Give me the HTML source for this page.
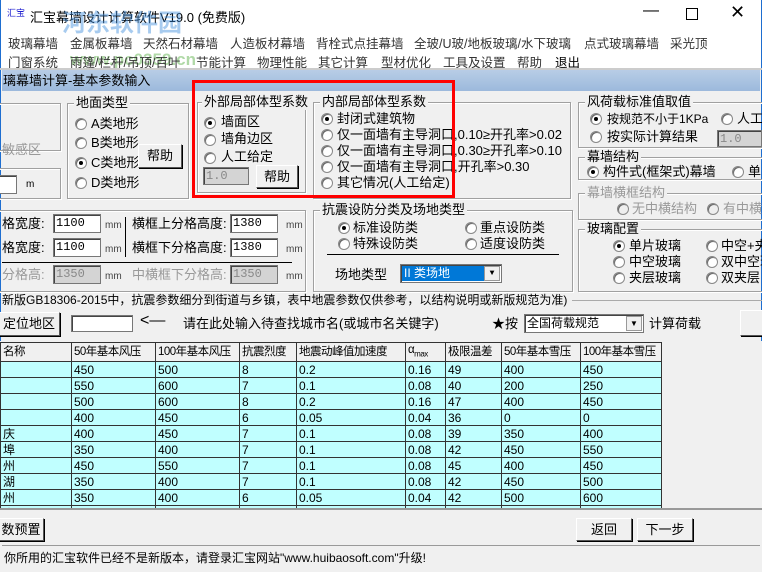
<!DOCTYPE html>
<html><head><meta charset="utf-8"><style>
*{box-sizing:border-box;margin:0;padding:0}
body{width:762px;height:572px;overflow:hidden;background:#f0f0f0;font-family:"Liberation Sans","Noto Sans CJK SC",sans-serif;font-size:12px;color:#000;position:relative}
.a{position:absolute;white-space:nowrap}
.grp{position:absolute;border:1px solid #a0a0a0;box-shadow:inset 1px 1px 0 #fff,1px 1px 0 #fff}
.lg{position:absolute;top:-9px;left:6px;background:#f0f0f0;padding:0 2px;font-size:13px;line-height:16px;white-space:nowrap}
.r{position:absolute;width:12px;height:12px;border-radius:50%;background:#fff;border:1px solid #888;box-shadow:inset 1px 1px 0 #666}
.r.on::after{content:"";position:absolute;left:3px;top:3px;width:4px;height:4px;border-radius:50%;background:#000}
.t{font-size:13px;line-height:16px}
.inp{position:absolute;background:#fff;border:1px solid #777;box-shadow:inset 1px 1px 0 #444;font-family:"Liberation Mono","Noto Sans CJK SC",monospace;font-size:12px;line-height:16px;padding-left:2px;white-space:nowrap}
.dis{background:#d4d4d4;color:#888}
.btn{position:absolute;background:#f0f0f0;border:1px solid #fff;border-right-color:#555;border-bottom-color:#555;box-shadow:1px 1px 0 #000;font-size:13px;text-align:center;white-space:nowrap}
table{border-collapse:collapse;position:absolute;left:0;top:342px;table-layout:fixed;width:661px;font-family:"Liberation Sans","Noto Sans CJK SC",sans-serif;font-size:12px}
td{border:1px solid #333;height:16px;padding:0 2px;line-height:14px;background:#c0ffff;white-space:nowrap;overflow:hidden}
tr.h td{background:#f0f0f0;height:15px;font-size:11.5px;letter-spacing:-0.5px}
.mm{font-size:10px;color:#444}
.m{position:absolute;font-size:12.5px;color:#333;white-space:nowrap}
</style></head><body>
<div class="a" style="left:0;top:0;width:762px;height:68px;background:#fff"></div>
<div class="a" style="left:0;top:0;width:1px;height:572px;background:#1e6ed0"></div>
<div class="a" style="left:761px;top:0;width:1px;height:572px;background:#1e6ed0"></div>
<div class="a" style="left:7px;top:6px;font-size:9px;color:#2020d0">汇宝</div>
<div class="a" style="left:30px;top:7px;font-size:13px">汇宝幕墙设计计算软件V19.0 (免费版)</div>
<div class="a" style="left:62px;top:10px;font-size:24px;font-weight:bold;color:rgba(60,140,220,.45);line-height:28px">河东软件园</div>
<div class="a" style="left:70px;top:50px;font-size:17px;font-weight:bold;color:rgba(80,170,60,.45)">www.pc0359.cn</div>
<div class="a" style="left:643px;top:2px;font-size:16px">—</div>
<div class="a" style="left:686px;top:8px;width:12px;height:12px;border:1px solid #000"></div>
<div class="a" style="left:730px;top:2px;font-size:18px">✕</div>

<div class="m" style="left:8px;top:33px">玻璃幕墙</div>
<div class="m" style="left:70px;top:33px">金属板幕墙</div>
<div class="m" style="left:143px;top:33px">天然石材幕墙</div>
<div class="m" style="left:230px;top:33px">人造板材幕墙</div>
<div class="m" style="left:316px;top:33px">背栓式点挂幕墙</div>
<div class="m" style="left:414px;top:33px">全玻/U玻/地板玻璃/水下玻璃</div>
<div class="m" style="left:584px;top:33px">点式玻璃幕墙</div>
<div class="m" style="left:670px;top:33px">采光顶</div>
<div class="m" style="left:8px;top:52px">门窗系统</div>
<div class="m" style="left:70px;top:52px">雨篷/栏杆/吊顶/百叶</div>
<div class="m" style="left:196px;top:52px">节能计算</div>
<div class="m" style="left:257px;top:52px">物理性能</div>
<div class="m" style="left:318px;top:52px">其它计算</div>
<div class="m" style="left:381px;top:52px">型材优化</div>
<div class="m" style="left:443px;top:52px">工具及设置</div>
<div class="m" style="left:517px;top:52px">帮助</div>
<div class="m" style="left:555px;top:52px;color:#000">退出</div>

<div class="a" style="left:0;top:68px;width:762px;height:2px;background:#ccc"></div>
<div class="a" style="left:2px;top:70px;width:758px;height:21px;background:linear-gradient(#b8cde6,#9cb9dc)"></div>
<div class="a t" style="left:3px;top:73px">璃幕墙计算-基本参数输入</div>

<div class="grp" style="left:-2px;top:103px;width:63px;height:48px"></div>
<div class="a t" style="left:2px;top:142px;color:#999">敏感区</div>
<div class="grp" style="left:-2px;top:168px;width:63px;height:31px"></div>
<div class="inp" style="left:-2px;top:175px;width:19px;height:19px"></div>
<div class="a" style="left:26px;top:179px;font-size:10px">m</div>

<div class="grp" style="left:67px;top:103px;width:122px;height:96px"><span class="lg">地面类型</span></div>
<div class="r" style="left:75px;top:118px"></div><div class="a t" style="left:91px;top:116px">A类地形</div>
<div class="r" style="left:75px;top:137px"></div><div class="a t" style="left:91px;top:135px">B类地形</div>
<div class="r on" style="left:75px;top:157px"></div><div class="a t" style="left:91px;top:155px">C类地形</div>
<div class="r" style="left:75px;top:177px"></div><div class="a t" style="left:91px;top:175px">D类地形</div>
<div class="btn" style="left:138px;top:144px;width:44px;height:24px;line-height:22px">帮助</div>

<div class="grp" style="left:197px;top:102px;width:109px;height:91px"><span class="lg" style="left:4px">外部局部体型系数</span></div>
<div class="r on" style="left:204px;top:117px"></div><div class="a t" style="left:221px;top:114px">墙面区</div>
<div class="r" style="left:204px;top:134px"></div><div class="a t" style="left:221px;top:131px">墙角边区</div>
<div class="r" style="left:204px;top:152px"></div><div class="a t" style="left:221px;top:149px">人工给定</div>
<div class="inp dis" style="left:203px;top:167px;width:46px;height:18px">1.0</div>
<div class="btn" style="left:256px;top:165px;width:42px;height:23px;line-height:21px">帮助</div>

<div class="grp" style="left:313px;top:102px;width:258px;height:97px"><span class="lg">内部局部体型系数</span></div>
<div class="r on" style="left:321px;top:113px"></div><div class="a t" style="left:337px;top:111px">封闭式建筑物</div>
<div class="r" style="left:321px;top:129px"></div><div class="a t" style="left:337px;top:127px">仅一面墙有主导洞口,0.10≥开孔率&gt;0.02</div>
<div class="r" style="left:321px;top:145px"></div><div class="a t" style="left:337px;top:143px">仅一面墙有主导洞口,0.30≥开孔率&gt;0.10</div>
<div class="r" style="left:321px;top:161px"></div><div class="a t" style="left:337px;top:159px">仅一面墙有主导洞口,开孔率&gt;0.30</div>
<div class="r" style="left:321px;top:177px"></div><div class="a t" style="left:337px;top:175px">其它情况(人工给定)</div>

<div class="a" style="left:192px;top:80px;width:263px;height:118px;border:3px solid #f00"></div>

<div class="grp" style="left:578px;top:102px;width:190px;height:46px"><span class="lg">风荷载标准值取值</span></div>
<div class="r on" style="left:590px;top:113px"></div><div class="a t" style="left:607px;top:111px;font-size:12px">按规范不小于1KPa</div>
<div class="r" style="left:721px;top:113px"></div><div class="a t" style="left:737px;top:111px">人工</div>
<div class="r" style="left:590px;top:131px"></div><div class="a t" style="left:607px;top:129px">按实际计算结果</div>
<div class="inp dis" style="left:717px;top:130px;width:45px;height:17px">1.0</div>
<div class="grp" style="left:578px;top:157px;width:190px;height:23px"><span class="lg">幕墙结构</span></div>
<div class="r on" style="left:587px;top:166px"></div><div class="a t" style="left:603px;top:164px">构件式(框架式)幕墙</div>
<div class="r" style="left:732px;top:166px"></div><div class="a t" style="left:748px;top:164px">单</div>
<div class="grp" style="left:578px;top:193px;width:190px;height:27px"><span class="lg" style="color:#999">幕墙横框结构</span></div>
<div class="r" style="left:617px;top:203px;background:#eee"></div><div class="a t" style="left:632px;top:201px;color:#999">无中横结构</div>
<div class="r" style="left:707px;top:203px;background:#eee"></div><div class="a t" style="left:723px;top:201px;color:#999">有中横</div>
<div class="grp" style="left:578px;top:229px;width:190px;height:63px"><span class="lg">玻璃配置</span></div>
<div class="r on" style="left:613px;top:240px"></div><div class="a t" style="left:629px;top:238px">单片玻璃</div>
<div class="r" style="left:706px;top:240px"></div><div class="a t" style="left:721px;top:238px">中空+夹</div>
<div class="r" style="left:613px;top:256px"></div><div class="a t" style="left:629px;top:254px">中空玻璃</div>
<div class="r" style="left:706px;top:256px"></div><div class="a t" style="left:721px;top:254px">双中空玻</div>
<div class="r" style="left:613px;top:272px"></div><div class="a t" style="left:629px;top:270px">夹层玻璃</div>
<div class="r" style="left:706px;top:272px"></div><div class="a t" style="left:721px;top:270px">双夹层</div>

<div class="grp" style="left:-2px;top:210px;width:308px;height:82px"></div>
<div class="a t" style="left:2px;top:216px">格宽度:</div><div class="inp" style="left:53px;top:214px;width:48px;height:19px">1100</div><div class="a mm" style="left:105px;top:220px">mm</div>
<div class="a t" style="left:2px;top:240px">格宽度:</div><div class="inp" style="left:53px;top:238px;width:48px;height:19px">1100</div><div class="a mm" style="left:105px;top:244px">mm</div>
<div class="a" style="left:125px;top:217px;width:1px;height:40px;background:#000"></div>
<div class="a t" style="left:132px;top:216px">横框上分格高度:</div><div class="inp" style="left:230px;top:214px;width:48px;height:19px">1380</div><div class="a mm" style="left:286px;top:220px">mm</div>
<div class="a t" style="left:132px;top:240px">横框下分格高度:</div><div class="inp" style="left:230px;top:238px;width:48px;height:19px">1380</div><div class="a mm" style="left:286px;top:244px">mm</div>
<div class="a" style="left:2px;top:262px;width:290px;height:1px;background:#000"></div>
<div class="a t" style="left:2px;top:267px;color:#999">分格高:</div><div class="inp dis" style="left:53px;top:265px;width:48px;height:19px">1350</div><div class="a mm" style="left:105px;top:271px">mm</div>
<div class="a t" style="left:132px;top:267px;color:#999">中横框下分格高:</div><div class="inp dis" style="left:230px;top:265px;width:48px;height:19px">1350</div><div class="a mm" style="left:286px;top:271px">mm</div>

<div class="grp" style="left:313px;top:210px;width:260px;height:82px"><span class="lg">抗震设防分类及场地类型</span></div>
<div class="r on" style="left:338px;top:222px"></div><div class="a t" style="left:353px;top:220px">标准设防类</div>
<div class="r" style="left:338px;top:238px"></div><div class="a t" style="left:353px;top:236px">特殊设防类</div>
<div class="r" style="left:465px;top:222px"></div><div class="a t" style="left:480px;top:220px">重点设防类</div>
<div class="r" style="left:465px;top:238px"></div><div class="a t" style="left:480px;top:236px">适度设防类</div>
<div class="a" style="left:327px;top:254px;width:232px;height:1px;background:#000"></div>
<div class="a t" style="left:335px;top:267px">场地类型</div>
<div class="inp" style="left:400px;top:264px;width:102px;height:19px;padding:1px"><div style="background:#0078d7;color:#fff;width:82px;height:15px;font-family:'Liberation Sans','Noto Sans CJK SC',sans-serif;line-height:15px;padding-left:2px">II 类场地</div><div style="position:absolute;right:1px;top:1px;width:16px;height:15px;background:#f0f0f0;border:1px solid #999;font-size:8px;text-align:center;line-height:14px">▼</div></div>

<div class="a" style="left:2px;top:292px;font-size:12px;line-height:16px">新版GB18306-2015中，抗震参数细分到街道与乡镇，表中地震参数仅供参考，以结构说明或新版规范为准)</div>
<div class="a" style="left:572px;top:300px;width:190px;height:1px;background:#aaa"></div>

<div class="btn" style="left:-2px;top:312px;width:62px;height:24px;line-height:22px">定位地区</div>
<div class="inp" style="left:71px;top:315px;width:62px;height:17px"></div>
<div class="a" style="left:140px;top:312px;font-size:16px">&lt;—</div>
<div class="a t" style="left:183px;top:316px">请在此处输入待查找城市名(或城市名关键字)</div>
<div class="a t" style="left:492px;top:316px">★按</div>
<div class="inp" style="left:524px;top:314px;width:120px;height:19px;font-family:'Liberation Sans','Noto Sans CJK SC',sans-serif">全国荷载规范<div style="position:absolute;right:1px;top:1px;width:16px;height:15px;background:#f0f0f0;border:1px solid #999;font-size:8px;text-align:center;line-height:14px">▼</div></div>
<div class="a t" style="left:649px;top:316px">计算荷载</div>
<div class="btn" style="left:740px;top:310px;width:30px;height:26px"></div>

<div class="a" style="left:0;top:341px;width:762px;height:168px;background:#f0f0f0"></div>
<table>
<colgroup><col style="width:71px"><col style="width:84px"><col style="width:84px"><col style="width:57px"><col style="width:109px"><col style="width:40px"><col style="width:56px"><col style="width:79px"><col style="width:81px"></colgroup>
<tr class="h"><td>名称</td><td>50年基本风压</td><td>100年基本风压</td><td>抗震烈度</td><td>地震动峰值加速度</td><td>α<sub style="font-size:8px">max</sub></td><td>极限温差</td><td>50年基本雪压</td><td>100年基本雪压</td></tr>
<tr><td></td><td>450</td><td>500</td><td>8</td><td>0.2</td><td>0.16</td><td>49</td><td>400</td><td>450</td></tr>
<tr><td></td><td>550</td><td>600</td><td>7</td><td>0.1</td><td>0.08</td><td>40</td><td>200</td><td>250</td></tr>
<tr><td></td><td>500</td><td>600</td><td>8</td><td>0.2</td><td>0.16</td><td>47</td><td>400</td><td>450</td></tr>
<tr><td></td><td>400</td><td>450</td><td>6</td><td>0.05</td><td>0.04</td><td>36</td><td>0</td><td>0</td></tr>
<tr><td>庆</td><td>400</td><td>450</td><td>7</td><td>0.1</td><td>0.08</td><td>39</td><td>350</td><td>400</td></tr>
<tr><td>埠</td><td>350</td><td>400</td><td>7</td><td>0.1</td><td>0.08</td><td>42</td><td>450</td><td>550</td></tr>
<tr><td>州</td><td>450</td><td>550</td><td>7</td><td>0.1</td><td>0.08</td><td>45</td><td>400</td><td>450</td></tr>
<tr><td>湖</td><td>350</td><td>400</td><td>7</td><td>0.1</td><td>0.08</td><td>42</td><td>450</td><td>500</td></tr>
<tr><td>州</td><td>350</td><td>400</td><td>6</td><td>0.05</td><td>0.04</td><td>42</td><td>500</td><td>600</td></tr>
<tr><td>山</td><td>350</td><td>400</td><td>6</td><td>0.05</td><td>0.04</td><td>45</td><td>400</td><td>450</td></tr>
</table>
<div class="a" style="left:0;top:508px;width:762px;height:64px;background:#f0f0f0"></div>
<div class="a" style="left:0;top:508px;width:762px;height:2px;background:#999"></div>
<div class="btn" style="left:-2px;top:518px;width:46px;height:23px;line-height:21px">数预置</div>
<div class="btn" style="left:576px;top:518px;width:56px;height:23px;line-height:21px">返回</div>
<div class="btn" style="left:637px;top:518px;width:56px;height:23px;line-height:21px">下一步</div>
<div class="a" style="left:2px;top:545px;width:758px;height:1px;background:#999"></div>
<div class="a" style="left:4px;top:550px;font-size:12px;line-height:16px">你所用的汇宝软件已经不是新版本，请登录汇宝网站"www.huibaosoft.com"升级!</div>
</body></html>
